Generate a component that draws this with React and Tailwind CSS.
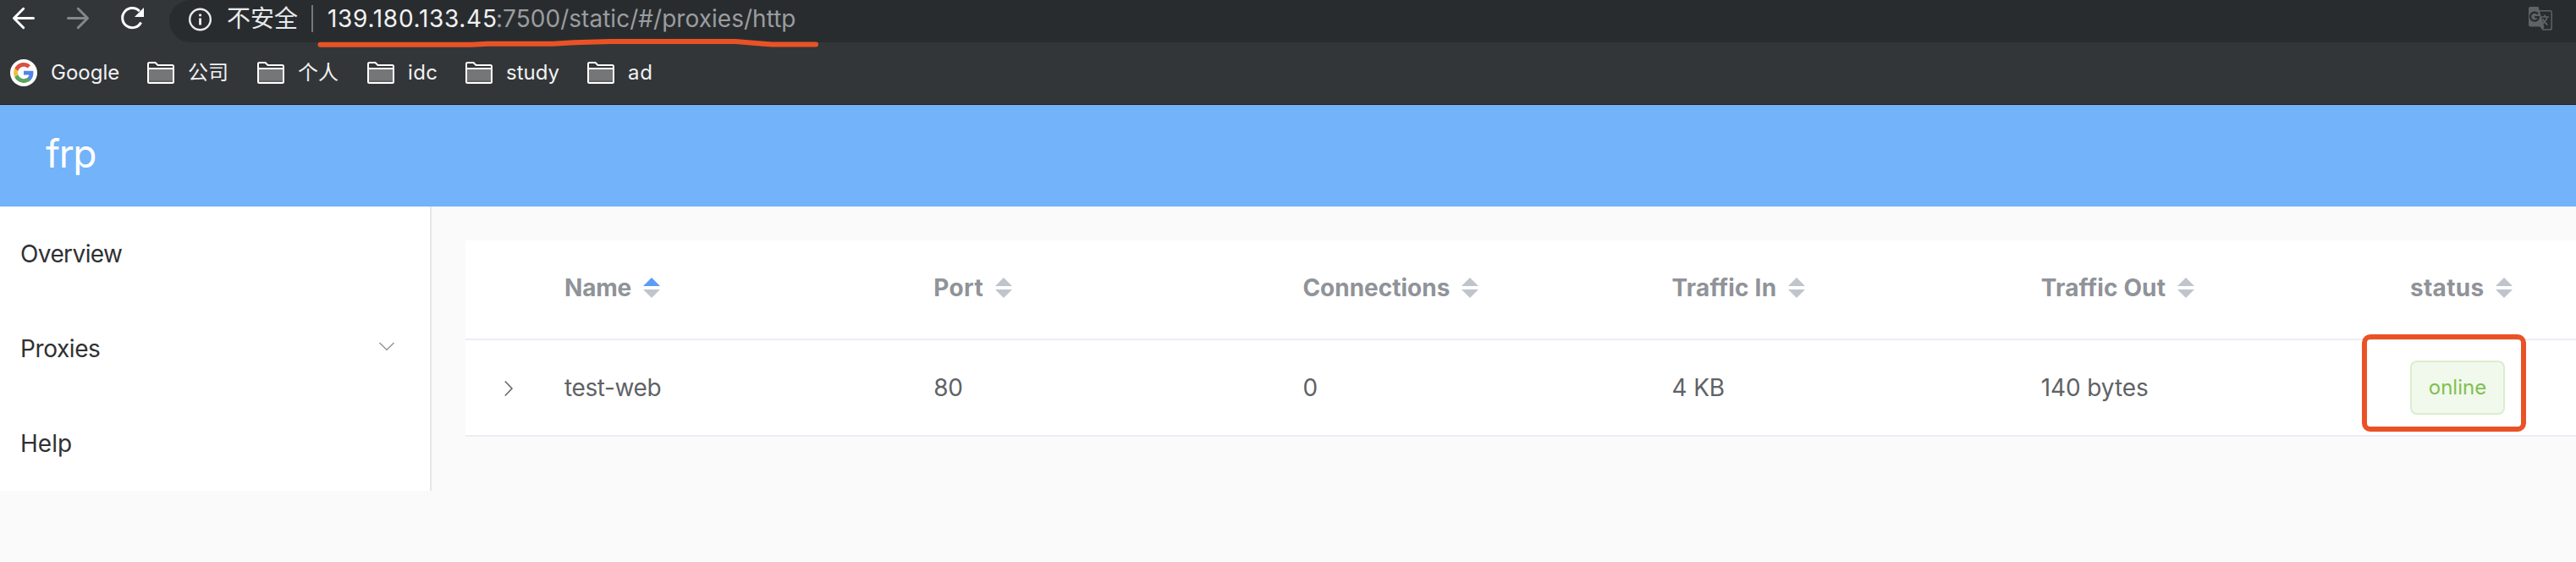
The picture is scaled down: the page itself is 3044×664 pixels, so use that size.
import React from "react";

function GoogleLogo() {
  return (
    <span className="flex size-8 shrink-0 items-center justify-center rounded-full bg-white">
      <svg viewBox="0 0 24 24" className="size-[26px]">
        <path fill="#5383ec" d="M22.56 12.25c0-.78-.07-1.53-.2-2.25H12v4.26h5.92c-.26 1.37-1.04 2.53-2.21 3.31v2.77h3.57c2.08-1.92 3.28-4.74 3.28-8.09z" />
        <path fill="#58a55c" d="M12 23c2.97 0 5.46-.98 7.28-2.66l-3.57-2.77c-.98.66-2.23 1.06-3.71 1.06-2.86 0-5.29-1.93-6.16-4.53H2.18v2.84C3.99 20.53 7.7 23 12 23z" />
        <path fill="#f1be42" d="M5.84 14.09c-.22-.66-.35-1.36-.35-2.09s.13-1.43.35-2.09V7.07H2.18C1.43 8.55 1 10.22 1 12s.43 3.45 1.18 4.93l2.85-2.22.81-.62z" />
        <path fill="#d95140" d="M12 5.38c1.62 0 3.06.56 4.21 1.64l3.15-3.15C17.45 2.09 14.97 1 12 1 7.7 1 3.99 3.47 2.18 7.07l3.66 2.84c.87-2.6 3.3-4.53 6.16-4.53z" />
      </svg>
    </span>
  );
}

function FolderIcon() {
  return (
    <svg viewBox="0 0 32 26" className="h-[26px] w-8 shrink-0" fill="none">
      <rect x="2" y="9" width="28" height="15" fill="#757678" />
      <rect x="2" y="22" width="28" height="2" fill="#626365" />
      <path d="M1 23.5V2.5Q1 1 2.500 1H9.500L12.500 4H29.500Q31 4 31 5.500V23.500Q31 25 29.500 25H2.500Q1 25 1 23.500Z" stroke="#fff" strokeWidth="2" />
      <path d="M1 8H31" stroke="#fff" strokeWidth="2" />
    </svg>
  );
}

function TranslateIcon() {
  return (
    <svg viewBox="0 0 28 28" className="size-7" fill="none">
      <path d="M13 4.700H25.500Q27.200 4.700 27.200 6.500V25.200Q27.200 27 25.500 27H17L14 22" stroke="#5f6366" strokeWidth="1.500" />
      <path d="M2 0H11.500L18.300 23.500L16.800 27.500L13.500 23.500H2Q0 23.500 0 21.500V2Q0 0 2 0Z" fill="#5f6366" />
      <path d="M11 8.600A5 5 0 1 0 12 12.200H7.200" stroke="#292c2e" strokeWidth="2.200" />
      <path d="M14.500 12H24M19 9.500V12M22 12Q20.500 17.500 15.500 20.500M16.500 14.500Q18.500 18.500 22.500 21.500" stroke="#5f6366" strokeWidth="1.700" />
    </svg>
  );
}

const bookmarks = [
  { label: "公司", width: "w-[130px]" },
  { label: "个人", width: "w-[130px]" },
  { label: "idc", width: "w-[116px]", tracking: "tracking-[0.4px]" },
  { label: "study", width: "w-[144px]" },
  { label: "ad", width: "w-[130px]", tracking: "tracking-[0.8px]" },
];

function BrowserBar() {
  return (
    <div className="relative h-[124px] border-b border-[#242628] bg-[#333639] text-[#f1f2f3]">
      <div className="flex h-[50px]">
        <div className="flex w-[200px] shrink-0 items-start pt-1.5 pl-3">
          <svg viewBox="12 6 32 32" className="size-8" fill="none" stroke="#fff" strokeWidth="3" strokeLinecap="round" strokeLinejoin="round">
            <path d="M39.500 21.500H17M27.700 10.300L16.500 21.500L27.700 32.700" />
          </svg>
          <svg viewBox="76 6 32 32" className="ml-8 size-8" fill="none" stroke="#85888a" strokeWidth="3" strokeLinecap="round" strokeLinejoin="round">
            <path d="M80.500 21.500H103M92.300 10.300L103.500 21.500L92.300 32.700" />
          </svg>
          <svg viewBox="140 6 32 32" className="ml-8 size-8" fill="none">
            <path d="M164.800 13.300A11.600 11.600 0 1 0 166.600 26.500" stroke="#fff" strokeWidth="3" />
            <path d="M170 9V20H159Z" fill="#fff" />
          </svg>
        </div>
        <div className="flex h-[50px] flex-1 items-center rounded-bl-[28px] rounded-tl-[28px] bg-[#292c2e] pb-1.5 pl-[22px] text-[28px] leading-8">
          <svg viewBox="0 0 28 28" className="mt-px size-7" fill="none">
            <circle cx="14.500" cy="14" r="12.300" stroke="#e8eaed" strokeWidth="2.400" />
            <path d="M13.100 12.500H16V20.500H13.100ZM13.100 7.500H16V10.300H13.100Z" fill="#e8eaed" />
          </svg>
          <span className="ml-[18px] w-[100px] text-[#e8eaed]">不安全</span>
          <span className="h-8 w-0.5 bg-[#76797b]" />
          <span className="ml-[17px] w-[199px] tracking-[0.7px]">139.180.133.45</span>
          <span className="flex-1 tracking-[0.03px] text-[#9a9da0]">:7500/static/#/proxies/http</span>
          <span className="mr-7 w-7">
            <TranslateIcon />
          </span>
        </div>
      </div>
      <div className="flex h-[72px] items-center pl-3 text-[24px] leading-7">
        <div className="flex w-[162px] items-center gap-4">
          <GoogleLogo />
          <span>Google</span>
        </div>
        {bookmarks.map((b) => (
          <div key={b.label} className={`flex items-center gap-4 ${b.width}`}>
            <FolderIcon />
            <span className={b.tracking}>{b.label}</span>
          </div>
        ))}
      </div>
      <svg viewBox="370 40 604 20" className="absolute left-[370px] top-10 h-5 w-[604px]" fill="none">
        <path d="M378.500 52.800H558L576 51.700H654L678 50.200L721 48.900H869L890 50.800L912 52.500H964" stroke="#ea5226" strokeWidth="6" strokeLinecap="round" strokeLinejoin="round" />
      </svg>
    </div>
  );
}

function Sidebar() {
  return (
    <nav className="h-[336px] w-[510px] shrink-0 border-r-2 border-[#e6e6e6] bg-white text-[28px] text-[#303133]">
      <div className="flex h-28 items-center pl-6 tracking-[-0.6px]">Overview</div>
      <div className="flex h-28 items-center justify-between pl-6 pr-[41px] tracking-[-0.4px]">
        <span>Proxies</span>
        <svg viewBox="0 0 20 12" className="mb-1.5 h-3 w-5" fill="none" stroke="#909399" strokeWidth="1.400">
          <path d="M1.500 2L10 10.300L18.500 2" />
        </svg>
      </div>
      <div className="flex h-28 items-center pl-6">Help</div>
    </nav>
  );
}

const columns = [
  { label: "Name", tracking: "tracking-[-0.2px]", active: true },
  { label: "Port", tracking: "tracking-[0.4px]" },
  { label: "Connections", tracking: "tracking-normal" },
  { label: "Traffic In", tracking: "tracking-[0.2px]" },
  { label: "Traffic Out", tracking: "tracking-[0.15px]" },
  { label: "status", tracking: "tracking-[0.3px]" },
];

const cells = [
  { label: "test-web", tracking: "tracking-[-0.4px]" },
  { label: "80", tracking: "tracking-[-0.3px]" },
  { label: "0", tracking: "tracking-normal" },
  { label: "4 KB", tracking: "tracking-[-0.2px]" },
  { label: "140 bytes", tracking: "tracking-[-0.1px]" },
];

function SortCaret({ active }) {
  return (
    <svg viewBox="0 0 20 24" className="h-6 w-5">
      <path d="M0 10L10 0L20 10Z" fill={active ? "#5a9cf8" : "#c0c4cc"} />
      <path d="M0 14L10 24L20 14Z" fill="#c0c4cc" />
    </svg>
  );
}

function ProxyTable() {
  return (
    <div className="ml-10 mt-10 min-w-0 flex-1 self-start overflow-hidden text-[28px]">
      <div className="grid h-[118px] grid-cols-[97px_repeat(6,436.2px)] items-center border-b-2 border-[#ebeef5] bg-white pb-1 font-bold text-[#909399]">
        <span />
        {columns.map((c) => (
          <div key={c.label} className="flex items-center gap-[14px] pl-5">
            <span className={c.tracking}>{c.label}</span>
            <SortCaret active={c.active} />
          </div>
        ))}
      </div>
      <div className="grid h-[114px] grid-cols-[97px_repeat(6,436.2px)] items-center border-b-2 border-[#ebeef5] bg-white text-[#606266]">
        <svg viewBox="0 0 12 20" className="ml-[45px] mt-0.5 h-5 w-3" fill="none" stroke="#606266" strokeWidth="1.500">
          <path d="M1.800 1.500L10 10L1.800 18.500" />
        </svg>
        {cells.map((c) => (
          <span key={c.label} className={`pl-5 ${c.tracking}`}>{c.label}</span>
        ))}
        <div className="relative pl-5">
          <span className="flex h-16 w-28 items-center justify-center rounded-lg border-2 border-[#dbedcf] bg-[#f1f9ec] text-[24px] text-[#7fc050]">
            online
          </span>
          <span className="absolute -left-[37px] -top-[31px] h-[115px] w-[194px] rounded-[10px] border-[6px] border-[#ea5226]" />
        </div>
      </div>
    </div>
  );
}

export default function App() {
  return (
    <div className="flex h-[664px] w-[3044px] flex-col overflow-hidden bg-[#fafafa] font-['Inter','Noto_Sans_CJK_SC',sans-serif]">
      <BrowserBar />
      <header className="h-[120px] shrink-0 bg-[#72b3f9] pl-[54px] text-[46px] leading-[114px] tracking-[-1.4px] text-white">frp</header>
      <main className="flex">
        <Sidebar />
        <ProxyTable />
      </main>
    </div>
  );
}
